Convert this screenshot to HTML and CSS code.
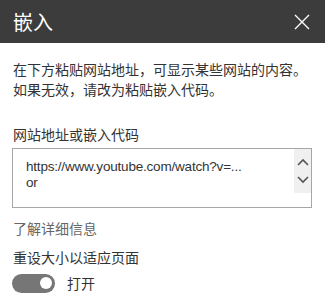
FILE: index.html
```html
<!DOCTYPE html>
<html lang="zh-CN">
<head>
  <meta charset="UTF-8" />
  <title>嵌入</title>
  <link rel="stylesheet" href="styles.css">
</head>
<body>
  <div class="panel">
    <div class="header">
      <div class="title">嵌入</div>
      <button class="close-btn" aria-label="关闭">
        <svg width="16" height="16" viewBox="0 0 16 16"><path d="M1 1L15 15M15 1L1 15" stroke="#fff" stroke-width="1.4" fill="none"/></svg>
      </button>
    </div>

    <div class="content">
      <p class="intro">在下方粘贴网站地址，可显示某些网站的内容。如果无效，请改为粘贴嵌入代码。</p>

      <div class="field-label">网站地址或嵌入代码</div>
      <div class="code-box">
        <div class="code-text">https://www.youtube.com/watch?v=...<br>or</div>
        <div class="scroll">
          <svg width="12" height="8" viewBox="0 0 12 8"><path d="M1 7L6 2L11 7" stroke="#555" stroke-width="1.6" fill="none"/></svg>
          <svg width="12" height="8" viewBox="0 0 12 8"><path d="M1 1L6 6L11 1" stroke="#555" stroke-width="1.6" fill="none"/></svg>
        </div>
      </div>

      <a class="learn-more">了解详细信息</a>

      <div class="field-label resize-label">重设大小以适应页面</div>
      <div class="toggle-row">
        <div class="toggle"><span class="knob"></span></div>
        <span class="toggle-text">打开</span>
      </div>
    </div>
  </div>
</body>
</html>
```

FILE: styles.css
```css
* { box-sizing: border-box; }
body {
  margin: 0;
  background: #fff;
  font-family: "Noto Sans CJK SC", sans-serif;
  color: #333;
  font-size: 14px;
}
.header {
  height: 43px;
  background-color: #3c3c3c;
  display: flex;
  align-items: center;
  justify-content: space-between;
  padding: 0 15px 0 13px;
}
.title { color: #fff; font-size: 20px; line-height: 20px; }
.close-btn {
  background: none; border: none;
  padding: 0; width: 16px; height: 16px;
  display: flex; cursor: pointer;
}
.content { padding: 0 13px; }
.intro {
  margin: 16px 0 0;
  line-height: 20px;
  width: 300px;
}
.field-label {
  margin-top: 25px;
  line-height: 20px;
  color: #333;
}
.code-box {
  margin: 4px 0 0 -1px;
  width: 300px;
  height: 60px;
  border: 1px solid #a6a6a6;
  display: flex;
  justify-content: space-between;
}
.code-text {
  padding: 10px 0 0 13px;
  line-height: 16px;
  font-size: 13.5px;
  font-family: "Liberation Sans", sans-serif;
  letter-spacing: -0.2px;
  color: #333;
}
.scroll {
  width: 17px;
  height: 44px;
  background: #f0f0f0;
  display: flex; flex-direction: column;
  align-items: center; justify-content: space-around;
  padding: 4px 0;
}
.learn-more {
  display: block;
  margin-top: 10px;
  line-height: 20px;
  color: #666;
}
.resize-label { margin-top: 9px; }
.toggle-row {
  display: flex; align-items: center;
  gap: 12px; margin-top: 6px;
}
.toggle {
  width: 43px; height: 19px;
  border-radius: 10px;
  background: #767676;
  position: relative;
  margin-left: -1px;
}
.knob {
  position: absolute;
  right: 3px; top: 3.5px;
  width: 12px; height: 12px;
  border-radius: 50%;
  background: #fff;
}
.toggle-text { line-height: 20px; }
```
